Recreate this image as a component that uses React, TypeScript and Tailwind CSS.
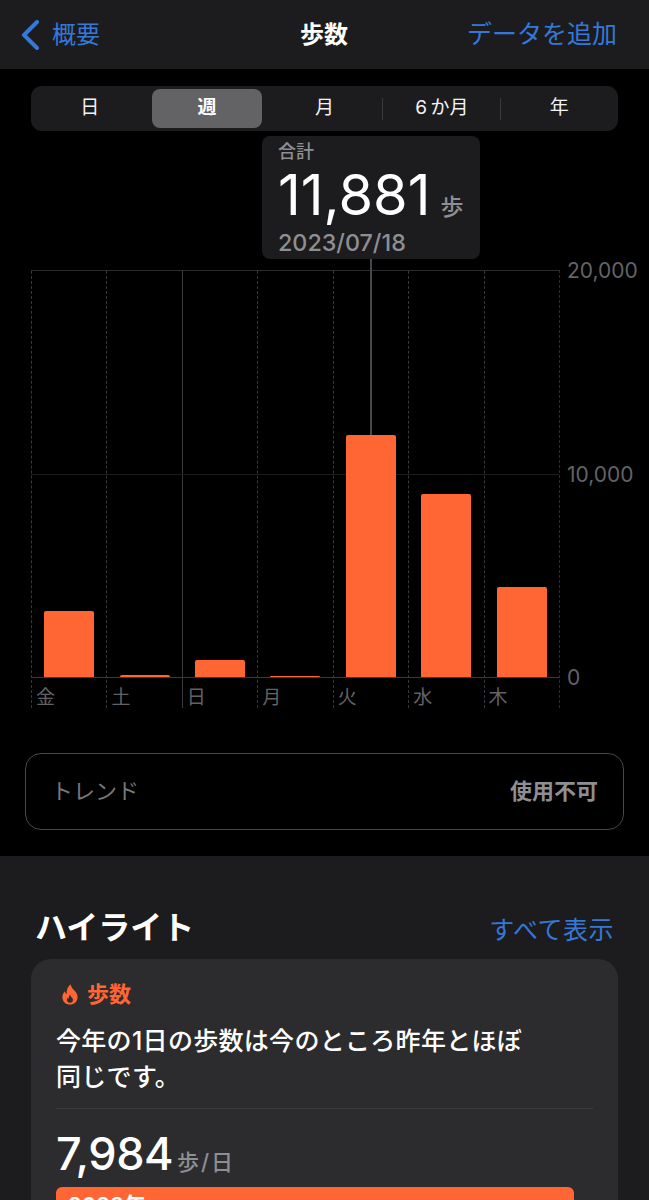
const FONT = "font-['Inter','Noto_Sans_CJK_JP','Noto_Sans',sans-serif]";

const periods = ["日", "週", "月", "6 か月", "年"];

const days = [
  { label: "金", height: 66 },
  { label: "土", height: 2 },
  { label: "日", height: 17 },
  { label: "月", height: 1 },
  { label: "火", height: 242, selected: true },
  { label: "水", height: 183 },
  { label: "木", height: 90 },
];

function SegmentBar() {
  return (
    <div className="grid grid-cols-5 items-center mx-[31px] bg-[#1c1c1e] rounded-[11px] h-[45px] text-[#f2f2f7] text-[19px]">
      {periods.map((period, index) => (
        <div key={period} className="relative flex justify-center items-center h-full">
          {index === 1 ? (
            <div className="flex justify-center items-center bg-[#636366] mx-1 rounded-lg w-[110px] h-[39px] font-semibold text-white">
              {period}
            </div>
          ) : (
            <span className="[word-spacing:-2px]">{period}</span>
          )}
          {index >= 2 && index < 4 ? (
            <div className="right-0 absolute bg-[#3a3a3c] w-px h-[22px]" />
          ) : null}
        </div>
      ))}
    </div>
  );
}

function Tooltip() {
  return (
    <div className="bg-[#1c1c1e] mt-[5px] ml-[262px] px-4 rounded-lg w-[218px] h-[123px]">
      <p className="pt-[4px] font-medium text-[#8e8e93] text-[18px] leading-[24px]">合計</p>
      <p className="flex items-baseline mt-[3px] h-[56px] text-white leading-[56px]">
        <span className="font-normal text-[56px]">11,881</span>
        <span className="ml-[10px] font-medium text-[#8e8e93] text-[23px]">歩</span>
      </p>
      <p className="mt-[5px] font-medium text-[#8e8e93] text-[23.3px] leading-[30px]">2023/07/18</p>
    </div>
  );
}

function Chart() {
  return (
    <div className="flex mt-[11px] ml-[31px]">
      <div className="relative grid grid-cols-7 border-[#2c2c2e] border-t border-r border-r-[#2c2c2e] border-dashed [border-top-style:solid] w-[529px] h-[438px]">
        {days.map((day, index) => (
          <div
            key={day.label}
            className={`flex flex-col border-l border-[#38383a] ${
              index === 2 ? "border-solid" : "border-dashed"
            }`}
          >
            <div className="z-10 flex flex-1 justify-center items-end">
              <div
                className="relative bg-[#ff6633] rounded-t-[2px] w-[50px]"
                style={{ height: day.height }}
              >
                {day.selected ? (
                  <div className="bottom-full left-[24px] absolute bg-[#48484a] w-[2px] h-[176px]" />
                ) : null}
              </div>
            </div>
            <div className="pt-[8px] pl-[4px] h-[31px] text-[#636366] text-[19px] leading-[26px]">
              {day.label}
            </div>
          </div>
        ))}
        <div className="top-[203px] right-0 left-0 absolute bg-[#1c1c1e] h-px" />
        <div className="top-[406px] right-0 left-0 absolute bg-[#3a3a3c] h-px" />
      </div>
      <div className="flex flex-col justify-between mt-[1px] ml-[7px] h-[407px] text-[#636366] text-[21px]">
        {["20,000", "10,000", "0"].map((label) => (
          <div key={label} className="flex items-center h-0">
            {label}
          </div>
        ))}
      </div>
    </div>
  );
}

function Flame() {
  return (
    <svg width="16" height="21" viewBox="0 0 16 21" fill="#ff6633">
      <path
        fillRule="evenodd"
        d="M8.6 0.3C9 3 10.4 4.4 12.2 6.3C14.2 8.3 15.6 10.4 15.6 13C15.6 17.4 12.4 20.6 8 20.6C3.6 20.6 0.4 17.5 0.4 13.2C0.4 10.7 1.4 8.7 3 7.2C3.2 8.5 3.7 9.5 4.6 10.1C4.4 6.2 5.6 2.6 8.6 0.3ZM8.2 10.4C8.3 11.8 9 12.6 9.8 13.5C10.5 14.3 11 15 11 16C11 17.6 9.8 18.7 8 18.7C6.2 18.7 5 17.6 5 16C5 15.1 5.3 14.3 5.9 13.7C6.1 14.2 6.4 14.6 6.8 14.8C6.7 13 7.1 11.5 8.2 10.4Z"
      />
    </svg>
  );
}

export default function App() {
  return (
    <div className={`flex flex-col bg-black w-[649px] h-[1200px] overflow-hidden ${FONT}`}>
      <header className="flex flex-none justify-between items-center bg-[#1c1c1e] pr-[32px] pl-[21px] h-[69px] text-[#3478d8] text-[25px]">
        <div className="flex items-center gap-[13px] w-[210px]">
          <svg width="18" height="30" viewBox="0 0 18 30" fill="none">
            <path
              d="M16 2L3 15L16 28"
              stroke="#3478d8"
              strokeWidth="4"
              strokeLinecap="round"
              strokeLinejoin="round"
            />
          </svg>
          <span className="text-[24px]">概要</span>
        </div>
        <span className="font-semibold text-[24px] text-white">歩数</span>
        <span className="w-[200px] text-right whitespace-nowrap">データを追加</span>
      </header>

      <section className="flex-none pt-[17px] h-[787px]">
        <SegmentBar />
        <Tooltip />
        <Chart />
        <div className="flex justify-between items-center mx-[25px] mt-[45px] px-[25px] border border-[#48484a] rounded-[16px] h-[77px]">
          <span className="text-[#77777b] text-[22px]">トレンド</span>
          <span className="font-semibold text-[#8e8e93] text-[22px]">使用不可</span>
        </div>
      </section>

      <section className="flex-1 bg-[#1c1c1e] px-[31px] pt-[48px]">
        <div className="flex justify-between items-center pr-[4px] pl-[4px] h-[48px]">
          <h2 className="font-semibold text-[32px] text-white">ハイライト</h2>
          <span className="mt-[6px] text-[#3478d8] text-[25px] tracking-[0.5px]">すべて表示</span>
        </div>
        <div className="bg-[#2c2c2e] mt-[7px] pt-[20px] pr-[25px] pb-8 pl-[25px] rounded-[20px]">
          <div className="flex items-center gap-[9px] pl-[6px] h-[30px] font-semibold text-[#ff6633] text-[22px]">
            <Flame />
            <span>歩数</span>
          </div>
          <p className="mt-[14px] font-medium text-[25px] text-white leading-[36px] tracking-[0.3px]">
            今年の1日の歩数は今のところ昨年とほぼ
            <br />
            同じです。
          </p>
          <div className="bg-[#3a3a3c] mt-[13px] h-px" />
          <p className="flex items-baseline mt-[15px] h-[60px] text-white leading-[60px]">
            <span className="font-medium text-[45px] tracking-[-0.5px]">7,984</span>
            <span className="ml-[4px] font-medium text-[#8e8e93] text-[22px] [word-spacing:-4px]">歩 / 日</span>
          </p>
          <div className="bg-[#ff6633] mt-[3px] px-3 pt-[4px] rounded-md w-[518px] h-[40px] font-semibold text-[22px] text-white leading-[28px]">
            2023年
          </div>
        </div>
      </section>
    </div>
  );
}
